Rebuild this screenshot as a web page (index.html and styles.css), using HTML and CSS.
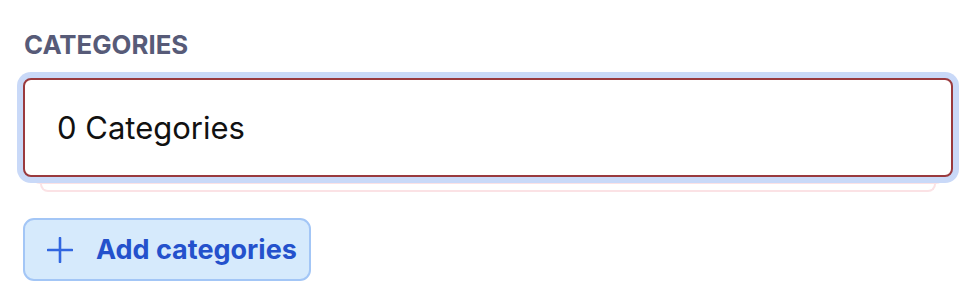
FILE: index.html
```html
<!DOCTYPE html>
<html>
<head>
<meta charset="utf-8">
<link rel="stylesheet" href="styles.css">
</head>
<body>
<div class="field">
  <div class="label">CATEGORIES</div>
  <div class="stack">
    <div class="box">0 Categories</div>
    <div class="layer layer1"></div>
    <div class="layer layer2"></div>
  </div>
  <button class="add-btn" type="button">
    <svg class="plus" width="26" height="26" viewBox="0 0 26 26" aria-hidden="true">
      <path d="M13 1V25M1 13H25" stroke="currentColor" stroke-width="2.6" stroke-linecap="round" fill="none"/>
    </svg>
    <span>Add categories</span>
  </button>
</div>
</body>
</html>
```
FILE: styles.css
```css
html, body {
  margin: 0;
  padding: 0;
  background: #ffffff;
}
body {
  font-family: Inter, "Noto Sans", sans-serif;
}
.field {
  padding: 31px 22px 0 23px;
  display: flex;
  flex-direction: column;
  align-items: flex-start;
}
.label {
  font-size: 25.8px;
  font-weight: 700;
  color: #575b78;
  line-height: 28px;
  margin-left: 1px;
}
.stack {
  margin-top: 19px;
  width: 930px;
  position: relative;
  display: flex;
  flex-direction: column;
  align-items: center;
}
.box {
  position: relative;
  z-index: 3;
  box-sizing: border-box;
  width: 930px;
  height: 99px;
  border: 2px solid #9a3a3e;
  border-radius: 8px;
  background: #fff;
  box-shadow: 0 0 0 6px #c9d9f8;
  display: flex;
  align-items: center;
  padding-left: 32px;
  font-size: 31px;
  color: #111111;
}
.layer {
  box-sizing: border-box;
  background: #fff;
  border: 2px solid #fbe2e5;
  border-top: none;
  border-radius: 0 0 8px 8px;
}
.layer1 {
  position: relative;
  z-index: 2;
  width: 912px;
  height: 8px;
  margin-top: -1px;
}
.layer2 {
  position: relative;
  z-index: 1;
  width: 896px;
  height: 8px;
}
.add-btn {
  margin-top: 26px;
  box-sizing: border-box;
  width: 288px;
  height: 63px;
  border: 2px solid #a3c6f6;
  border-radius: 11px;
  background: #d6eafc;
  display: flex;
  align-items: center;
  padding: 0 0 0 22px;
  gap: 23px;
  font-family: Inter, "Noto Sans", sans-serif;
  font-size: 27px;
  font-weight: 700;
  color: #2451cc;
  cursor: pointer;
}
.plus {
  color: #3166e0;
  flex: none;
}
```
